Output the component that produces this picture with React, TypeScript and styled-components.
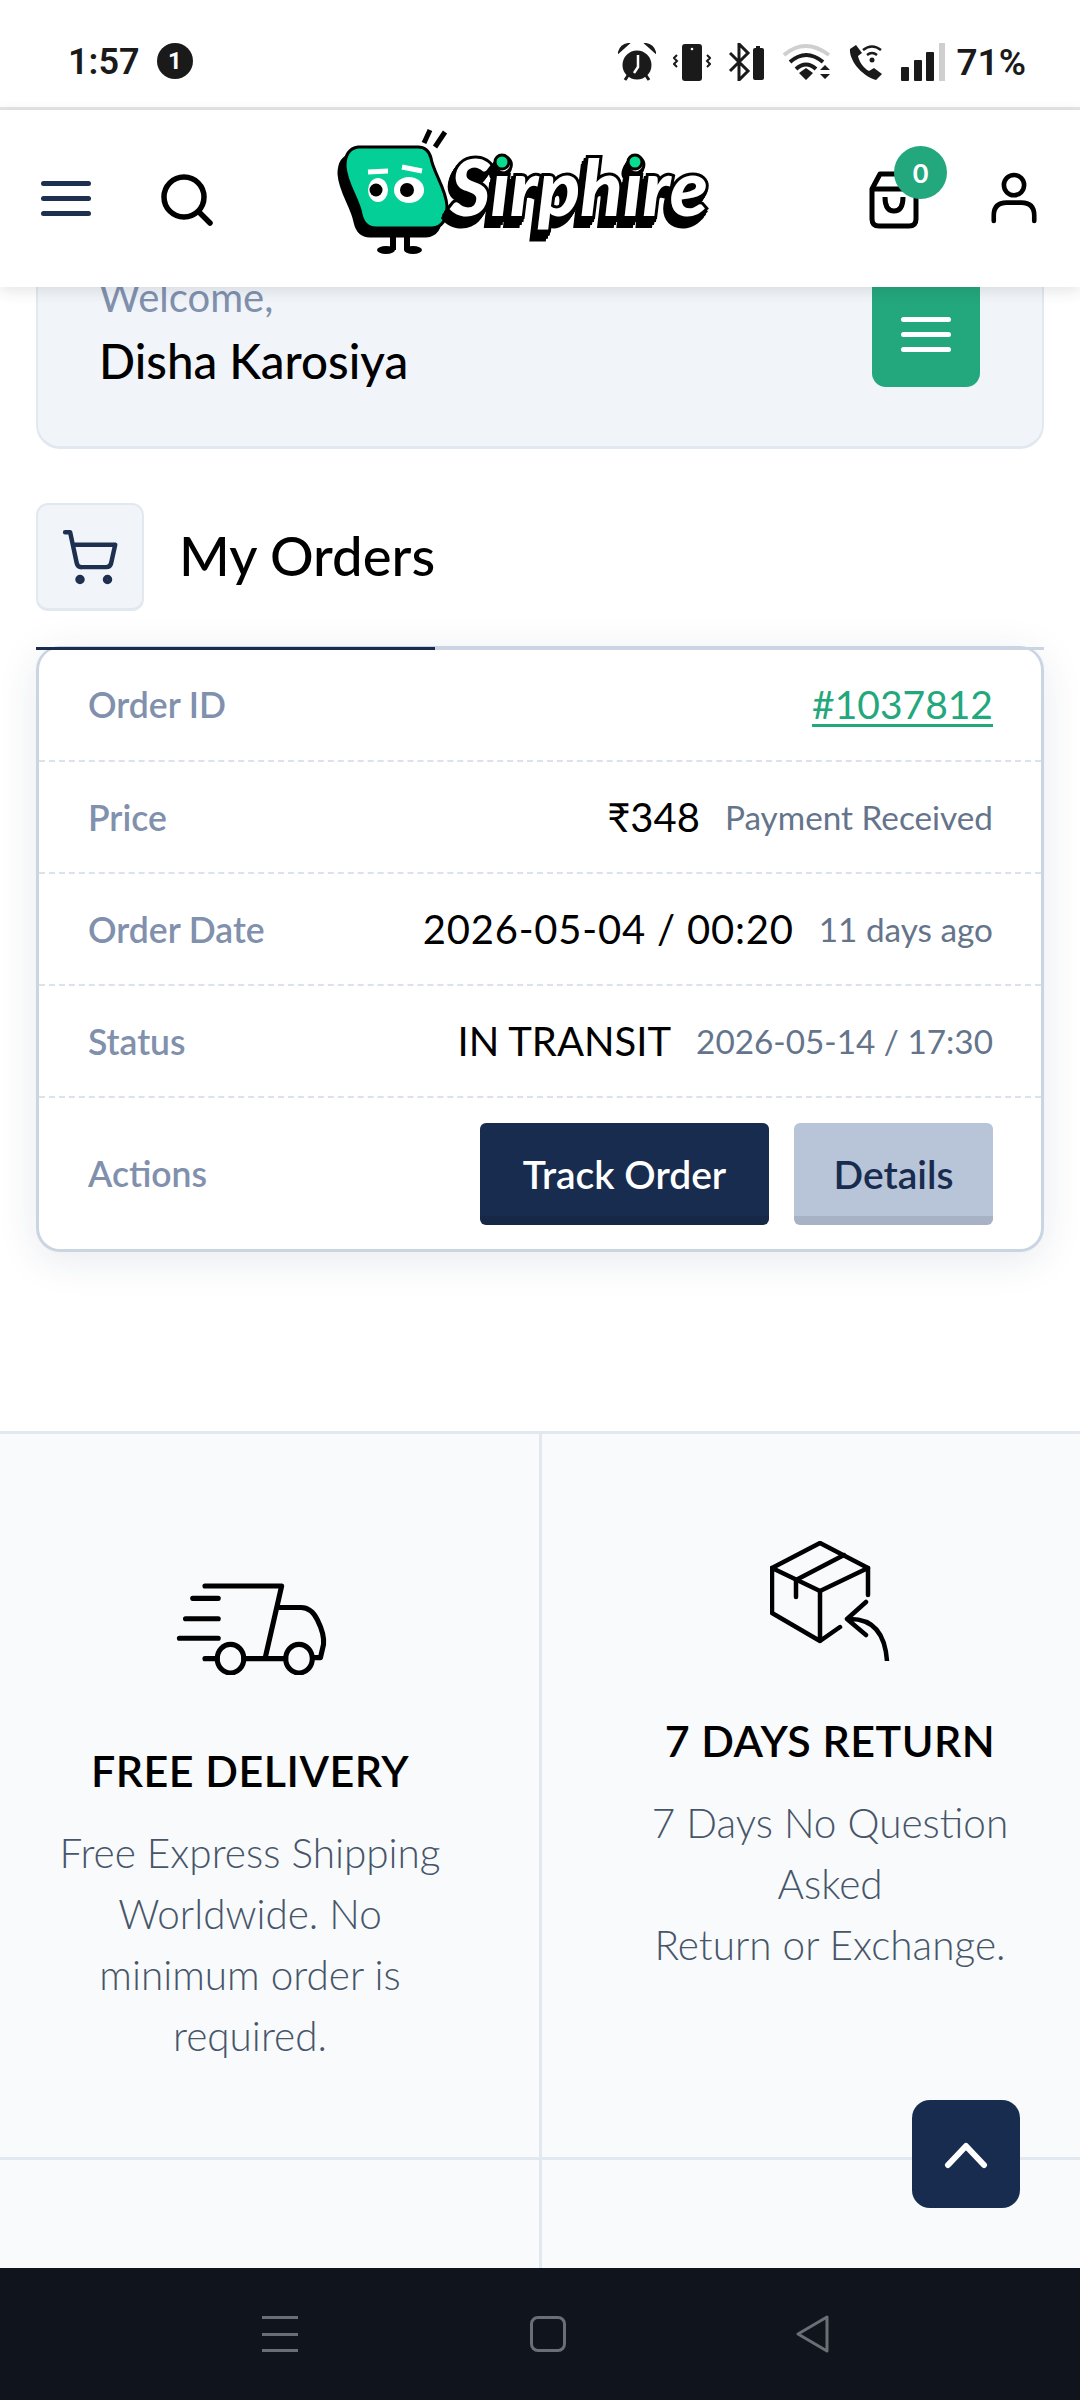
import React from 'react';
import styled, {createGlobalStyle} from 'styled-components';
import {ShoppingCart} from 'lucide-react';

const GlobalStyle = createGlobalStyle`
  html, body {
    margin: 0;
    padding: 0;
    background: #fff;
  }
  * {
    box-sizing: border-box;
  }
  body {
    font-family: "Lato", "Noto Sans", sans-serif;
  }
`;

const Page = styled.div`
  position: relative;
  width: 1080px;
  height: 2400px;
  display: flex;
  flex-direction: column;
  overflow: hidden;
  background: #fff;
`;

const StatusBar = styled.div`
  flex: none;
  height: 110px;
  padding: 43px 54px 0 68px;
  display: flex;
  align-items: flex-start;
  border-bottom: 3px solid #e5e5e5;
  color: #1a1a1a;
  font-family: "Roboto", sans-serif;
  font-weight: 600;
`;

const Clock = styled.div`
  font-size: 36px;
  line-height: 38px;
  width: 89px;
`;

const NoticeBadge = styled.div`
  width: 36px;
  height: 36px;
  border-radius: 50%;
  background: #1a1a1a;
  color: #fff;
  font-size: 24px;
  font-weight: 700;
  display: flex;
  align-items: center;
  justify-content: center;
`;

const StatusIcons = styled.div`
  margin-left: auto;
  display: flex;
  align-items: flex-start;
  gap: 17px;
`;

const Battery = styled.div`
  margin-left: -7px;
  font-size: 37px;
  line-height: 40px;
`;

const Header = styled.header`
  flex: none;
  position: relative;
  z-index: 3;
  height: 177px;
  display: flex;
  align-items: center;
  background: #fff;
  box-shadow: 0 4px 14px rgba(30, 41, 59, 0.12);
`;

const Hamburger = styled.div`
  margin-left: 41px;
  width: 50px;
  display: flex;
  flex-direction: column;
  gap: 10px;
  span {
    display: block;
    height: 5px;
    border-radius: 3px;
    background: ${({color}) => color || '#1e3050'};
  }
`;

const SearchIcon = styled.svg`
  margin-left: 69px;
  width: 54px;
  height: 54px;
`;

const Logo = styled.svg`
  position: absolute;
  left: 300px;
  top: -10px;
  width: 440px;
  height: 170px;
`;

const Wordmark = styled.text`
  font-family: "Lato", sans-serif;
  font-weight: 900;
  font-style: italic;
  font-size: 78px;
  fill: #fff;
  stroke: #000;
  stroke-width: 6px;
  paint-order: stroke fill;
  filter: drop-shadow(-2px 3px 0 #000) drop-shadow(-2px 3px 0 #000) drop-shadow(-1px 3px 0 #000);
`;

const BagWrap = styled.div`
  position: relative;
  margin-left: auto;
  width: 52px;
  height: 60px;
`;

const CountBadge = styled.div`
  position: absolute;
  left: 26px;
  top: -23px;
  width: 53px;
  height: 53px;
  border-radius: 50%;
  background: #23a77c;
  color: #fff;
  font-size: 27px;
  font-weight: 700;
  display: flex;
  align-items: center;
  justify-content: center;
`;

const UserIcon = styled.svg`
  margin: -2px 43px 0 71px;
  width: 46px;
  height: 52px;
`;

const Main = styled.main`
  flex: 1;
  min-height: 0;
  display: flex;
  flex-direction: column;
  overflow: hidden;
`;

const Content = styled.div`
  flex: none;
  height: 1144px;
  padding: 0 36px;
`;

const WelcomeCard = styled.section`
  height: 222px;
  margin-top: -60px;
  padding: 46px 62px 0 61px;
  display: flex;
  justify-content: space-between;
  background: #f1f5f9;
  border: 2px solid #e2e8f0;
  border-bottom-width: 3px;
  border-radius: 24px;
`;

const WelcomeText = styled.div`
  color: #8090ad;
  font-size: 40px;
  line-height: 44px;
`;

const UserName = styled.div`
  margin-top: 15px;
  color: #000;
  font-size: 47.5px;
  line-height: 54px;
  font-weight: 500;
`;

const MenuButton = styled.div`
  width: 108px;
  height: 158px;
  margin-top: -46px;
  padding-bottom: 22px;
  border-radius: 0 0 14px 14px;
  background: #23a77c;
  display: flex;
  align-items: flex-end;
  justify-content: center;
  ${Hamburger} {
    margin: 0 0 13px;
  }
`;

const TitleRow = styled.div`
  margin-top: 54px;
  height: 108px;
  display: flex;
  align-items: center;
  gap: 35px;
`;

const TitleIcon = styled.div`
  width: 108px;
  height: 108px;
  background: #f1f5f9;
  border: 2px solid #e2e8f0;
  border-bottom-width: 3px;
  border-radius: 12px;
  display: flex;
  align-items: center;
  justify-content: center;
  color: #1e3050;
`;

const Title = styled.h1`
  margin: -4px 0 0;
  font-size: 54.5px;
  line-height: 60px;
  font-weight: 500;
  color: #000;
`;

const Tabs = styled.div`
  position: relative;
  z-index: 1;
  margin-top: 36px;
  height: 3px;
  background: #cbd5e1;
`;

const ActiveTab = styled.div`
  width: 399px;
  height: 3px;
  background: #182c4f;
`;

const OrderCard = styled.section`
  margin-top: -4px;
  background: #fff;
  border: 3px solid #cbd5e1;
  border-top-width: 2px;
  border-radius: 24px;
  box-shadow: 0 8px 40px rgba(30, 50, 90, 0.1);
`;

const Row = styled.div`
  height: ${({tall}) => (tall ? '151px' : '112px')};
  padding: 0 48px 0 49px;
  display: flex;
  align-items: center;
  justify-content: space-between;
  border-bottom: ${({tall}) => (tall ? 'none' : '2px dashed #dce2eb')};
  &:first-child {
    height: 114px;
  }
`;

const Label = styled.div`
  color: #8090ad;
  font-size: 35.5px;
  font-weight: 600;
`;

const Values = styled.div`
  display: flex;
  align-items: center;
  gap: 25px;
`;

const Value = styled.div`
  color: #000;
  font-size: 40px;
  letter-spacing: ${({spaced}) => (spaced ? '0.8px' : '0')};
`;

const Note = styled.div`
  color: #64748b;
  font-size: 33.3px;
`;

const OrderLink = styled.a`
  color: #23a77c;
  font-size: 39px;
  text-decoration: underline;
  text-underline-offset: 5px;
  text-decoration-thickness: 3px;
`;

const Button = styled.div`
  height: 102px;
  width: ${({wide}) => (wide ? '289px' : '199px')};
  padding-top: 9px;
  display: flex;
  align-items: center;
  justify-content: center;
  border-radius: 6px;
  font-size: 39px;
  font-weight: 600;
  color: ${({wide}) => (wide ? '#fff' : '#182c4f')};
  background: ${({wide}) => (wide ? '#182c4f' : '#b8c4d8')};
  border-bottom: 9px solid ${({wide}) => (wide ? '#162846' : '#a7b2c4')};
`;

const Features = styled.div`
  flex: 1;
  display: grid;
  grid-template-columns: 542px 538px;
  grid-template-rows: 726px 1fr;
  background: #f8fafc;
  border-top: 3px solid #e2e8f0;
`;

const Feature = styled.div`
  display: flex;
  flex-direction: column;
  align-items: center;
  text-align: center;
  border-bottom: 3px solid #e2e8f0;
  border-right: ${({side}) => (side === 'left' ? '3px solid #e2e8f0' : 'none')};
  padding: ${({side}) => (side === 'left' ? '149px 39px 0 0' : '107px 0 0 38px')};
`;

const TruckWrap = styled.div`
  margin-left: 6px;
  height: 92px;
`;

const BlankCell = styled.div`
  border-right: ${({side}) => (side === 'left' ? '3px solid #e2e8f0' : 'none')};
`;

const FeatureTitle = styled.h3`
  margin: ${({side}) => (side === 'left' ? '66px' : '50px')} 0 0;
  font-size: 43px;
  line-height: 60px;
  font-weight: 600;
  color: #000;
  letter-spacing: 0.5px;
`;

const FeatureText = styled.p`
  margin: 21px 0 0;
  font-size: 40.5px;
  line-height: 61px;
  font-weight: 300;
  color: #475569;
`;

const TopButton = styled.div`
  position: absolute;
  left: 912px;
  top: 2100px;
  width: 108px;
  height: 108px;
  border-radius: 18px;
  background: #182c4f;
  display: flex;
  align-items: center;
  justify-content: center;
`;

const NavBar = styled.nav`
  flex: none;
  height: 132px;
  background: #10141c;
  display: grid;
  grid-template-columns: 262px 36px 232px 36px 229px 36px;
  align-items: center;
`;

const NavLines = styled.div`
  grid-column: 2;
  height: 36px;
  display: flex;
  flex-direction: column;
  justify-content: space-between;
  span {
    display: block;
    height: 3px;
    background: #6a6e75;
  }
`;

const NavHome = styled.div`
  grid-column: 4;
  height: 36px;
  border: 3px solid #6a6e75;
  border-radius: 8px;
`;

const NavBack = styled.svg`
  grid-column: 6;
  width: 36px;
  height: 38px;
`;

const StatusGlyphs = () => (
    <StatusIcons>
        <svg width="38" height="38" viewBox="0 0 38 38">
            <circle cx="19" cy="22" r="14.5" fill="#1a1a1a"/>
            <path d="M1 9 Q3 2 10 1 Z M37 9 Q35 2 28 1 Z" fill="#1a1a1a" stroke="#1a1a1a" strokeWidth="2"/>
            <path d="M7 37l4-6M31 37l-4-6" stroke="#1a1a1a" strokeWidth="3"/>
            <path d="M20 12v12l-4 6" stroke="#fff" strokeWidth="2.5" fill="none"/>
        </svg>
        <svg width="38" height="38" viewBox="0 0 38 38">
            <rect x="9" y="1" width="20" height="37" rx="3" fill="#1a1a1a"/>
            <circle cx="19" cy="6" r="1.3" fill="#fff"/>
            <path d="M4 12l-3 3 3 3-3 3 3 3M34 12l3 3-3 3 3 3-3 3" stroke="#1a1a1a" strokeWidth="2" fill="none"/>
        </svg>
        <svg width="37" height="38" viewBox="0 0 37 38">
            <path d="M2 10l18 18-9 9V1l9 9L2 28" stroke="#1a1a1a" strokeWidth="3" fill="none"/>
            <path d="M25 7q0-2 2-2h1V3h4v2h2q2 0 2 2v28q0 2-2 2h-7q-2 0-2-2z" fill="#1a1a1a"/>
        </svg>
        <svg width="50" height="38" viewBox="0 0 50 38">
            <path d="M2 12Q23-6 47 12" stroke="#cfcfcf" strokeWidth="4" fill="none"/>
            <path d="M8 19Q24 5 41 19M14 26Q24 17 34 26" stroke="#1a1a1a" strokeWidth="4" fill="none"/>
            <path d="M17 30l7-5 7 5-7 7zM38 27l5-5 5 5zM38 31h10l-5 5z" fill="#1a1a1a"/>
        </svg>
        <svg width="34" height="38" viewBox="0 0 34 38">
            <path d="M7 2L1 6c-1 10 10 26 26 31l6-6-8-6-5 3C14 25 10 18 9 13l4-3z" fill="#1a1a1a"/>
            <path d="M14 7Q23 0 32 7M18 12Q23 8 28 12" stroke="#1a1a1a" strokeWidth="2.5" fill="none"/>
            <circle cx="23" cy="17" r="2.5" fill="#1a1a1a"/>
        </svg>
        <svg width="46" height="38" viewBox="0 0 46 38">
            <rect x="1" y="24" width="8" height="14" rx="1" fill="#1a1a1a"/>
            <rect x="14" y="17" width="8" height="21" rx="1" fill="#1a1a1a"/>
            <rect x="26" y="9" width="8" height="29" rx="1" fill="#1a1a1a"/>
            <rect x="39" y="0" width="6" height="38" fill="#cfcfcf"/>
        </svg>
        <Battery>71%</Battery>
    </StatusIcons>
);

const blob = 'M58 47L118 47Q128 47 131 58C133 72 146 88 147 106Q147 127 132 128L76 128Q64 128 61 114C58 98 46 84 45 66Q45 49 58 47Z';

const SirphireLogo = () => (
    <Logo viewBox="0 0 440 170">
        <path d={blob} transform="translate(-6 8)" fill="#000" stroke="#000" strokeWidth="3"/>
        <path d={blob} fill="#04cf97" stroke="#000" strokeWidth="3"/>
        <ellipse cx="78" cy="90" rx="10" ry="12" fill="#fff"/>
        <ellipse cx="109" cy="90" rx="15" ry="13" fill="#fff"/>
        <circle cx="76" cy="90" r="6.5" fill="#000"/>
        <circle cx="107" cy="90" r="7" fill="#000"/>
        <path d="M68 72l20-1M102 67l20 4" stroke="#fff" strokeWidth="5"/>
        <path d="M124 43l6-13M135 47l10-15" stroke="#000" strokeWidth="5"/>
        <path d="M93 135v15M107 135v15" stroke="#000" strokeWidth="6"/>
        <ellipse cx="86" cy="150" rx="9" ry="4" fill="#000"/>
        <ellipse cx="113" cy="150" rx="9" ry="4" fill="#000"/>
        <Wordmark x="150" y="116" textLength="258" lengthAdjust="spacingAndGlyphs">Sirphire</Wordmark>
        <circle cx="202" cy="62" r="7" fill="#09dc8f" stroke="#000" strokeWidth="3"/>
        <circle cx="335" cy="62" r="7" fill="#09dc8f" stroke="#000" strokeWidth="3"/>
    </Logo>
);

const TruckIcon = () => (
    <svg width="154" height="92" viewBox="0 0 150 90" fill="none" stroke="#000" strokeWidth="5" strokeLinecap="round" strokeLinejoin="round">
        <path d="M28 3H103L87 73"/>
        <path d="M100 24H122Q132 24 138 36Q145 50 144 60L141 73H134"/>
        <path d="M16 15H41M9 35H41M3 54H41M28 74H40M66 74H107"/>
        <ellipse cx="53" cy="74" rx="13" ry="14"/>
        <ellipse cx="120" cy="74" rx="13" ry="14"/>
    </svg>
);

const BoxIcon = () => (
    <svg width="120" height="120" viewBox="0 0 120 120" fill="none" stroke="#000" strokeWidth="4.5" strokeLinecap="round" strokeLinejoin="round">
        <path d="M50 2L98 27 50 50 2 27Z"/>
        <path d="M2 27V72L50 100 70 86M50 50V100M98 27V54"/>
        <path d="M26 39L74 14M26 39V56"/>
        <path d="M96 61L77 78 96 94M77 78Q114 76 117 120"/>
    </svg>
);

const App: React.FC = () => {
    return (
        <Page>
            <GlobalStyle/>
            <StatusBar>
                <Clock>1:57</Clock>
                <NoticeBadge>1</NoticeBadge>
                <StatusGlyphs/>
            </StatusBar>
            <Header>
                <Hamburger><span/><span/><span/></Hamburger>
                <SearchIcon viewBox="0 0 54 54" fill="none" stroke="#000" strokeWidth="5.5" strokeLinecap="round">
                    <circle cx="24" cy="25" r="20"/>
                    <path d="M39 40L50 51"/>
                </SearchIcon>
                <SirphireLogo/>
                <BagWrap>
                    <svg width="52" height="60" viewBox="0 0 52 60" fill="none" stroke="#000" strokeWidth="5" strokeLinejoin="round">
                        <path d="M4 20L12 5H40L48 20V50Q48 57 41 57H11Q4 57 4 50Z"/>
                        <path d="M4 20H48M17 28Q17 42 26 42Q35 42 35 28"/>
                    </svg>
                    <CountBadge>0</CountBadge>
                </BagWrap>
                <UserIcon viewBox="0 0 50 56" fill="none" stroke="#000" strokeWidth="5" strokeLinecap="round">
                    <circle cx="25" cy="14" r="11"/>
                    <path d="M3 53V47Q3 33 17 33H33Q47 33 47 47V53"/>
                </UserIcon>
            </Header>
            <Main>
                <Content>
                    <WelcomeCard>
                        <div>
                            <WelcomeText>Welcome,</WelcomeText>
                            <UserName>Disha Karosiya</UserName>
                        </div>
                        <MenuButton>
                            <Hamburger color="#fff"><span/><span/><span/></Hamburger>
                        </MenuButton>
                    </WelcomeCard>
                    <TitleRow>
                        <TitleIcon>
                            <ShoppingCart size={60} strokeWidth={1.8}/>
                        </TitleIcon>
                        <Title>My Orders</Title>
                    </TitleRow>
                    <Tabs><ActiveTab/></Tabs>
                    <OrderCard>
                        <Row>
                            <Label>Order ID</Label>
                            <OrderLink>#1037812</OrderLink>
                        </Row>
                        <Row>
                            <Label>Price</Label>
                            <Values>
                                <Value>₹348</Value>
                                <Note>Payment Received</Note>
                            </Values>
                        </Row>
                        <Row>
                            <Label>Order Date</Label>
                            <Values>
                                <Value spaced>2026-05-04 / 00:20</Value>
                                <Note>11 days ago</Note>
                            </Values>
                        </Row>
                        <Row>
                            <Label>Status</Label>
                            <Values>
                                <Value>IN TRANSIT</Value>
                                <Note>2026-05-14 / 17:30</Note>
                            </Values>
                        </Row>
                        <Row tall>
                            <Label>Actions</Label>
                            <Values>
                                <Button wide>Track Order</Button>
                                <Button>Details</Button>
                            </Values>
                        </Row>
                    </OrderCard>
                </Content>
                <Features>
                    <Feature side="left">
                        <TruckWrap><TruckIcon/></TruckWrap>
                        <FeatureTitle side="left">FREE DELIVERY</FeatureTitle>
                        <FeatureText>Free Express Shipping<br/>Worldwide. No<br/>minimum order is<br/>required.</FeatureText>
                    </Feature>
                    <Feature side="right">
                        <BoxIcon/>
                        <FeatureTitle side="right">7 DAYS RETURN</FeatureTitle>
                        <FeatureText>7 Days No Question<br/>Asked<br/>Return or Exchange.</FeatureText>
                    </Feature>
                    <BlankCell side="left"/>
                    <BlankCell side="right"/>
                </Features>
            </Main>
            <NavBar>
                <NavLines><span/><span/><span/></NavLines>
                <NavHome/>
                <NavBack viewBox="0 0 36 38" fill="none" stroke="#6a6e75" strokeWidth="3" strokeLinejoin="round">
                    <path d="M32 2V36L3 19Z"/>
                </NavBack>
            </NavBar>
            <TopButton>
                <svg width="48" height="30" viewBox="0 0 48 30" fill="none" stroke="#fff" strokeWidth="6" strokeLinecap="round" strokeLinejoin="round">
                    <path d="M6 26L24 7 42 26"/>
                </svg>
            </TopButton>
        </Page>
    );
};

export default App;
